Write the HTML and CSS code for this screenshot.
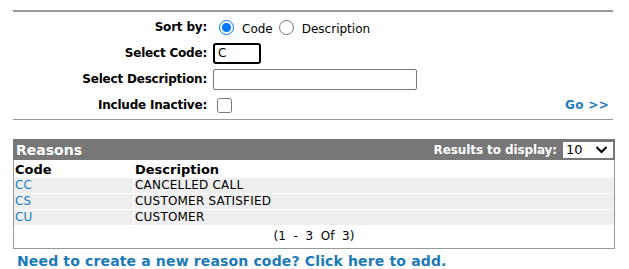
FILE: index.html
```html
<!DOCTYPE html>
<html lang="en">
<head>
  <meta charset="UTF-8" />
  <title>Reasons</title>
  <link rel="stylesheet" href="styles.css">
</head>
<body>
  <div class="page">

    <!-- search form -->
    <form class="search">
      <label class="lbl">Sort by:</label>
      <div class="ctl">
        <input type="radio" name="sort" class="radio" checked />
        <span class="opt">Code</span>
        <input type="radio" name="sort" class="radio" />
        <span class="opt">Description</span>
      </div>

      <label class="lbl">Select Code:</label>
      <div class="ctl">
        <input type="text" class="txt code-box" value="C" />
      </div>

      <label class="lbl">Select Description:</label>
      <div class="ctl">
        <input type="text" class="txt desc-box" />
      </div>

      <label class="lbl">Include Inactive:</label>
      <div class="ctl last">
        <input type="checkbox" class="check" />
        <a href="#" class="go">Go &gt;&gt;</a>
      </div>
    </form>

    <!-- results -->
    <div class="reasons">
      <div class="bar">
        <span class="bar-title">Reasons</span>
        <span class="results">Results to display:
          <span class="pick">10
            <svg width="13" height="9" viewBox="0 0 13 9"><path d="M1.5 2 L6.5 7 L11.5 2" fill="none" stroke="#000" stroke-width="2"/></svg>
          </span>
        </span>
      </div>
      <table class="list">
        <tr class="head"><td class="c1">Code</td><td>Description</td></tr>
        <tr><td class="c1"><a href="#">CC</a></td><td>CANCELLED CALL</td></tr>
        <tr><td class="c1"><a href="#">CS</a></td><td>CUSTOMER SATISFIED</td></tr>
        <tr><td class="c1"><a href="#">CU</a></td><td>CUSTOMER</td></tr>
      </table>
      <div class="pager">(1&nbsp; -&nbsp; 3&nbsp; Of&nbsp; 3)</div>
    </div>

    <a href="#" class="add">Need to create a new reason code? Click here to add.</a>
  </div>
</body>
</html>
```

FILE: styles.css
```css
body {
  margin: 0;
  font-family: 'DejaVu Sans', Verdana, sans-serif;
  font-size: 12px;
  color: #000;
  background: #fff;
}

a {
  color: #1f7dbf;
  text-decoration: none;
}

.page {
  width: 601px;
  padding: 10px 0 0 13px;
}

/* search form */
.search {
  display: grid;
  grid-template-columns: 194px 1fr;
  grid-auto-rows: 22px;
  column-gap: 6px;
  row-gap: 4px;
  padding: 4px 0 3px;
  border-top: 2px solid #999;
  border-bottom: 1px solid #999;
  width: 600px;
}

.lbl {
  font-weight: bold;
  text-align: right;
  align-self: center;
  letter-spacing: -0.2px;
}

.ctl {
  display: flex;
  align-items: center;
}

.ctl.last {
  justify-content: space-between;
  padding-right: 4px;
}

.radio {
  width: 15px;
  height: 15px;
  margin: 0 0 0 6px;
  accent-color: #0075ff;
}

.opt {
  margin: 3px 0 0 8px;
}

.txt {
  box-sizing: border-box;
  height: 21px;
  margin: 0;
  padding: 1px 3px;
  font-family: inherit;
  font-size: 12px;
  border: 1px solid #767676;
  border-radius: 2px;
  outline: none;
}

.code-box {
  width: 48px;
  border: 2px solid #000;
  border-radius: 3px;
}

.desc-box {
  width: 204px;
}

.check {
  width: 15px;
  height: 15px;
  margin: 0 0 0 4px;
}

.go {
  font-weight: bold;
  font-size: 12px;
  letter-spacing: 0.3px;
}

/* reasons table */
.reasons {
  margin-top: 19px;
  border: 1px solid #999;
  border-top: none;
  width: 600px;
}

.bar {
  display: flex;
  justify-content: space-between;
  align-items: center;
  height: 21px;
  margin: 0 -1px 0 -1px;
  padding: 0 2px 0 3px;
  background: #777;
  color: #fff;
  font-weight: bold;
}

.bar-title {
  font-size: 14px;
}

.results {
  display: flex;
  align-items: center;
  letter-spacing: -0.1px;
}

.pick {
  display: flex;
  align-items: center;
  justify-content: space-between;
  box-sizing: border-box;
  width: 50px;
  height: 16px;
  margin-left: 6px;
  padding: 0 5px 0 3px;
  background: #fff;
  color: #000;
  font-weight: normal;
  font-size: 13px;
  letter-spacing: 0;
}

.list {
  width: 100%;
  border-collapse: separate;
  border-spacing: 0 1px;
}

.list td {
  height: 15px;
  padding: 0 0 0 1px;
  background: #eee;
  line-height: 15px;
  letter-spacing: 0.2px;
}

.list td.c1 {
  width: 118px;
  border-right: 1px solid #fff;
}

.list .head td {
  height: 16px;
  background: #fff;
  font-weight: bold;
  font-size: 13px;
  letter-spacing: 0;
}

.pager {
  height: 22px;
  line-height: 21px;
  text-align: center;
}

.add {
  display: block;
  margin: 4px 0 0 4px;
  font-weight: bold;
  font-size: 14px;
  letter-spacing: 0.15px;
  color: #1b7ab8;
}
```
